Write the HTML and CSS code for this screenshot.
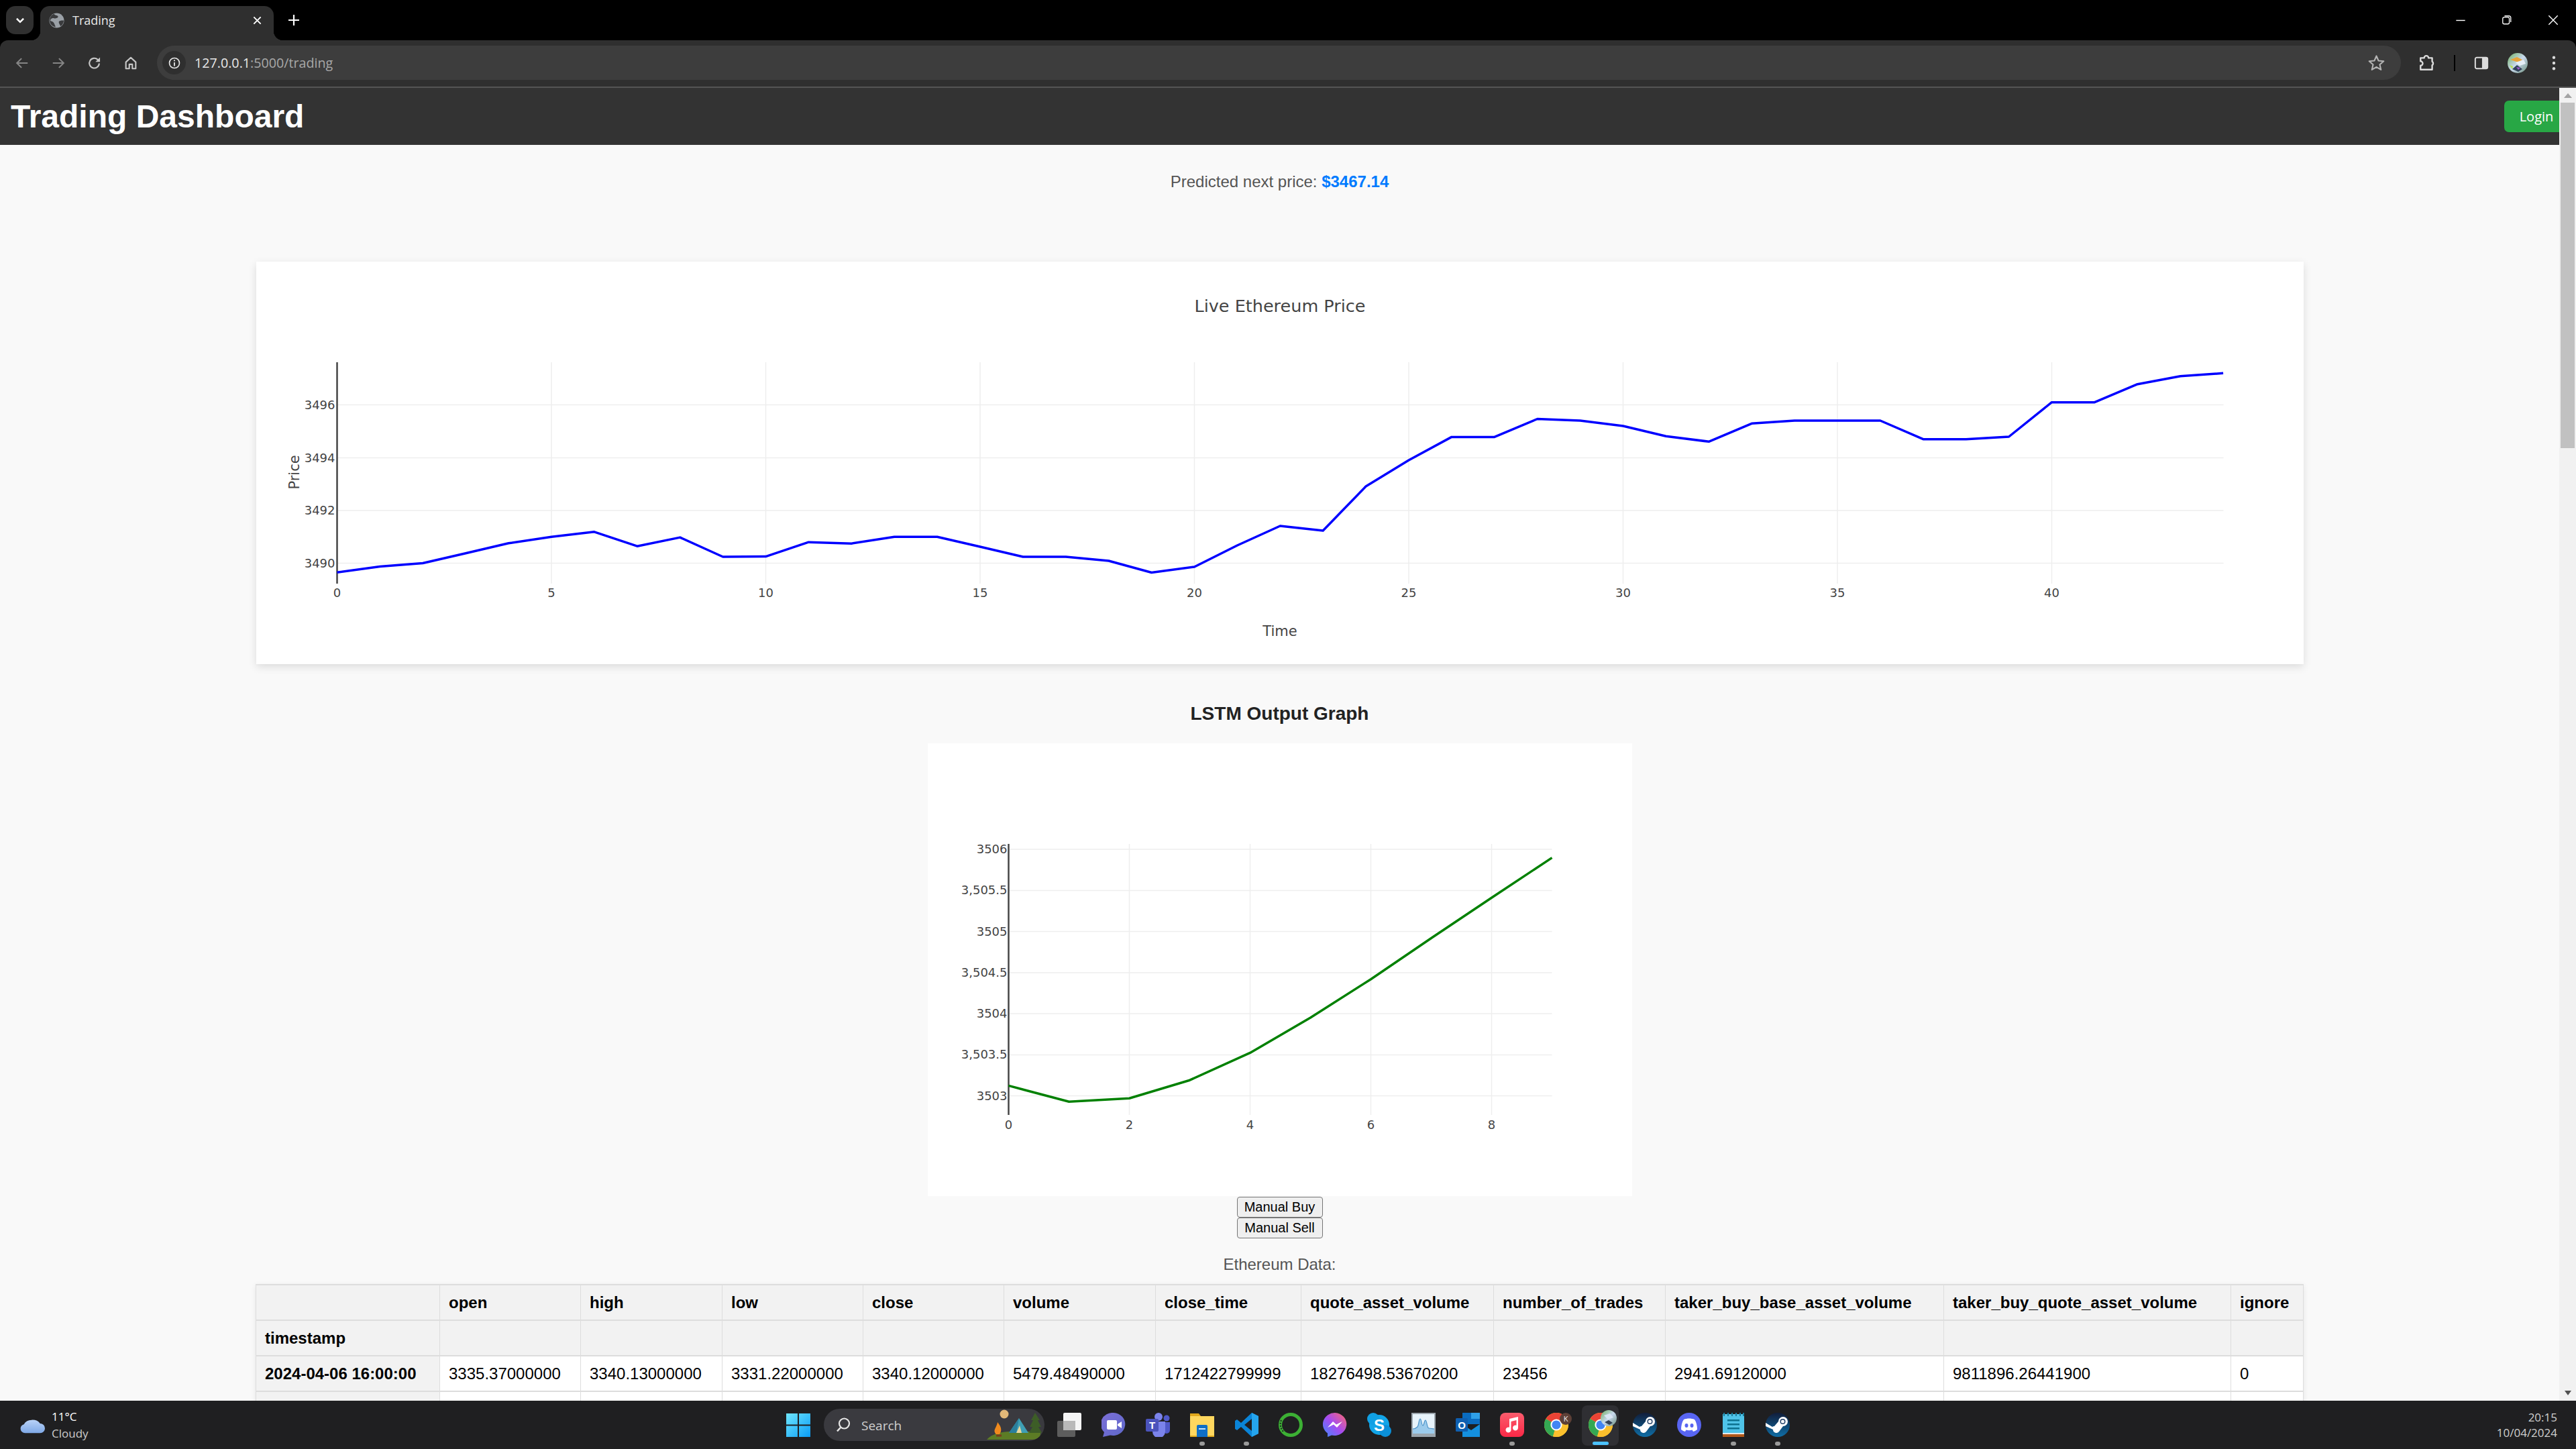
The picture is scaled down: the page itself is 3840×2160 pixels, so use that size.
FILE: index.html
```html
<!DOCTYPE html>
<html lang="en">
<head>
<meta charset="utf-8">
<title>Trading</title>
<link rel="stylesheet" href="styles.css">
</head>
<body>
<svg class="defs" width="0" height="0" aria-hidden="true">
  <defs>
    <symbol id="chrome" viewBox="0 0 36 36">
      <circle cx="18" cy="18" r="18" fill="#fbc02d"/>
      <path d="M18 18 2.4 9A18 18 0 0 1 33.6 9Z" fill="#ea4335"/>
      <path d="M18 18 2.4 9A18 18 0 0 0 13 35.3Z" fill="#34a853"/>
      <path d="M18 18 33.6 9A18 18 0 0 1 13 35.3Z" fill="#fbc02d"/>
      <circle cx="18" cy="18" r="8.6" fill="#fff"/>
      <circle cx="18" cy="18" r="6.6" fill="#4285f4"/>
    </symbol>
    <symbol id="steam" viewBox="0 0 36 36">
      <defs><linearGradient id="steamg" x1="0" y1="0" x2="0" y2="1"><stop offset="0" stop-color="#111d3a"/><stop offset="1" stop-color="#0f6ea6"/></linearGradient></defs>
      <circle cx="18" cy="18" r="18" fill="url(#steamg)"/>
      <path d="M0 20 11 25a5 5 0 0 0 9 3l6-8a7 7 0 1 0-7-7l-6 7a5 5 0 0 0-3 1L0 15Z" fill="#fff"/>
      <circle cx="25.500" cy="13" r="4" fill="#1a3a63"/>
      <circle cx="25.500" cy="13" r="2.600" fill="#fff"/>
    </symbol>
  </defs>
</svg>

<div class="tabstrip">
  <div class="tab-search">
    <svg class="ico16" viewBox="0 0 16 16"><path d="M3.500 6 8 10.500 12.500 6" fill="none" stroke="#fff" stroke-width="2.200"/></svg>
  </div>
  <div class="tab">
    <svg class="favicon" viewBox="0 0 24 24"><circle cx="12" cy="12" r="11.500" fill="#9aa0a6"/><path d="M8 1.500c1 3 5 2 6 4s-3 4-6 3-6 1-6 4c2 1 5 1 6 4s2 3 2 6A11 11 0 0 1 1 12 11 11 0 0 1 8 1.500ZM16 13c2-1 5-1 7-1a11 11 0 0 1-5 9c-1-3-4-6-2-8Z" fill="#3a3b3d"/></svg>
    <span class="tab-title">Trading</span>
    <svg class="tab-close" viewBox="0 0 16 16"><path d="M2.500 2.500l11 11M13.500 2.500l-11 11" stroke="#fff" stroke-width="2"/></svg>
  </div>
  <svg class="tab-new" viewBox="0 0 20 20"><path d="M10 2v16M2 10h16" stroke="#fff" stroke-width="2.200"/></svg>
  <div class="window-controls">
    <span class="winbtn"><svg viewBox="0 0 18 18"><path d="M1.500 9.500h15" stroke="#fff" stroke-width="1.600"/></svg></span>
    <span class="winbtn"><svg viewBox="0 0 18 18"><rect x="2" y="4" width="11" height="11.500" rx="2.500" fill="none" stroke="#fff" stroke-width="1.500"/><path d="M5 2h7.500A3 3 0 0 1 15.500 5v7.500" fill="none" stroke="#fff" stroke-width="1.500"/></svg></span>
    <span class="winbtn"><svg viewBox="0 0 18 18"><path d="M1.500 1.500l15 15M16.500 1.500l-15 15" stroke="#fff" stroke-width="1.600"/></svg></span>
  </div>
</div>

<div class="toolbar">
  <span class="tool"><svg class="ico" viewBox="0 0 24 24"><path d="M21 12H4M11 4.500 3.500 12l7.500 7.500" fill="none" stroke="#858585" stroke-width="2.300"/></svg></span>
  <span class="tool"><svg class="ico" viewBox="0 0 24 24"><path d="M3 12h17M13 4.500l7.500 7.500-7.500 7.500" fill="none" stroke="#858585" stroke-width="2.300"/></svg></span>
  <span class="tool"><svg class="ico" viewBox="0 0 24 24"><path d="M19.500 12.500A8 8 0 1 1 17 6.300L20 9" fill="none" stroke="#c7c7c7" stroke-width="2.300"/><path d="M20.800 2.800v7.400h-7.400" fill="#c7c7c7"/></svg></span>
  <span class="tool"><svg class="ico" viewBox="0 0 24 24"><path d="M4 21V10.500L12 3l8 7.500V21h-5.500v-7h-5v7Z" fill="none" stroke="#c7c7c7" stroke-width="2.300" stroke-linejoin="round"/></svg></span>
  <div class="omnibox">
    <span class="site-info"><svg class="ico-info" viewBox="0 0 24 24"><circle cx="12" cy="12" r="10" fill="none" stroke="#e8e8e8" stroke-width="2.200"/><path d="M12 10.500V18" stroke="#e8e8e8" stroke-width="2.400"/><circle cx="12" cy="7" r="1.500" fill="#e8e8e8"/></svg></span>
    <span class="url"><span class="url-host">127.0.0.1</span>:5000/trading</span>
    <svg class="star" viewBox="0 0 26 26"><path d="M13 2.500l3.200 7.400 8 .7-6 5.300 1.800 7.900L13 19.600l-7 4.200 1.800-7.900-6-5.300 8-.7Z" fill="none" stroke="#b5b5b5" stroke-width="2.200" stroke-linejoin="round"/></svg>
  </div>
  <span class="tool tool-ext"><svg class="ico-ext" viewBox="0 0 24 24"><path d="M3 5h5a3 3 0 0 1 6 0h5v5a3 3 0 0 1 0 5v6H3v-5.500a3 3 0 0 0 0-6Z" fill="none" stroke="#dcdcdc" stroke-width="2.200" stroke-linejoin="round"/></svg></span>
  <span class="tool-sep"></span>
  <span class="tool"><svg class="ico" viewBox="0 0 24 24"><rect x="2" y="3" width="20" height="18" rx="2.500" fill="none" stroke="#dcdcdc" stroke-width="2.200"/><path d="M13 3h7a2 2 0 0 1 2 2v14a2 2 0 0 1-2 2h-7Z" fill="#dcdcdc"/></svg></span>
  <span class="tool"><svg class="avatar" viewBox="0 0 30 30"><defs><linearGradient id="av" x1="0" y1="0" x2="1" y2="1"><stop offset="0" stop-color="#6fae5e"/><stop offset=".5" stop-color="#c9d9ee"/><stop offset="1" stop-color="#6b8f7a"/></linearGradient></defs><circle cx="15" cy="15" r="15" fill="url(#av)"/><path d="M4 10 14 6l8 4-6 4Z" fill="#e8a33a"/><path d="M12 14 24 10l3 6-9 3Z" fill="#e6eef7"/><path d="M7 24 14 18l8 6-6 4Z" fill="#31435a"/><path d="M3 18l5 2-1 4Z" fill="#b8e04a"/><path d="M13 21l6 1-3 3Z" fill="#a35bd0"/></svg></span>
  <span class="tool"><svg class="ico" viewBox="0 0 24 24"><circle cx="12" cy="3" r="2.400" fill="#dcdcdc"/><circle cx="12" cy="12" r="2.400" fill="#dcdcdc"/><circle cx="12" cy="21" r="2.400" fill="#dcdcdc"/></svg></span>
</div>

<div class="viewport">
  <main class="page">
    <header class="app-header">
      <h1 class="app-title">Trading Dashboard</h1>
      <button class="login" type="button">Login</button>
    </header>

    <p class="prediction">Predicted next price: <strong class="prediction-value">$3467.14</strong></p>

    <section class="card">
      <svg class="chart" viewBox="381.500 390 3052 600">
        <g class="grid">
          <path d="M821.500 540V870M1141 540V870M1460.500 540V870M1780 540V870M2099.500 540V870M2419 540V870M2738.500 540V870M3058 540V870"/>
          <path d="M503 603.500H3314M503 682.500H3314M503 761H3314M503 839.500H3314"/>
        </g>
        <path class="axis" d="M502 540V870"/>
        <polyline class="line-blue" points="502,853.300 565.900,844.600 629.800,839.500 693.700,824.800 757.600,809.800 821.500,800.300 885.400,792.800 949.300,814.200 1013.200,801.100 1077.100,830 1141,829.600 1204.900,808.200 1268.800,810.200 1332.700,800.300 1396.600,800.300 1460.500,815 1524.400,830 1588.300,830 1652.200,836 1716.100,853.500 1780,845 1843.900,813 1907.800,784 1971.700,791 2035.600,725 2099.500,686 2163.400,651.400 2227.300,651.400 2291.200,624.500 2355.100,627 2419,635 2482.900,650.300 2546.800,658.300 2610.700,631.300 2674.600,627 2738.500,627 2802.400,627 2866.300,654.700 2930.200,654.700 2994.100,651 3058,599.700 3121.900,599.700 3185.800,572.700 3249.700,560.700 3313.600,556.300"/>
        <text class="chart-title" x="1907.500" y="465">Live Ethereum Price</text>
        <g class="ytick">
          <text x="499" y="610">3496</text>
          <text x="499" y="689">3494</text>
          <text x="499" y="767">3492</text>
          <text x="499" y="846">3490</text>
        </g>
        <g class="xtick">
          <text x="502" y="890">0</text>
          <text x="821.500" y="890">5</text>
          <text x="1141" y="890">10</text>
          <text x="1460.500" y="890">15</text>
          <text x="1780" y="890">20</text>
          <text x="2099.500" y="890">25</text>
          <text x="2419" y="890">30</text>
          <text x="2738.500" y="890">35</text>
          <text x="3058" y="890">40</text>
        </g>
        <text class="axis-title" x="1907.500" y="948">Time</text>
        <text class="axis-title" transform="translate(445 704) rotate(-90)">Price</text>
      </svg>
    </section>

    <h3 class="lstm-title">LSTM Output Graph</h3>
    <div class="plot-box">
      <svg class="chart" viewBox="1382.500 1108 1050 675">
        <g class="grid">
          <path d="M1683 1258V1662M1863 1258V1662M2043 1258V1662M2223 1258V1662"/>
          <path d="M1504 1266H2313M1504 1327.500H2313M1504 1388.500H2313M1504 1450H2313M1504 1511H2313M1504 1572.500H2313M1504 1633.500H2313"/>
        </g>
        <path class="axis" d="M1503 1258V1662"/>
        <polyline class="line-green" points="1503,1618.400 1593,1642.300 1683,1637.200 1773,1610.200 1863,1569.400 1953,1517 2043,1459.700 2133,1398.500 2223,1338.300 2313,1278.600"/>
        <g class="ytick">
          <text x="1501" y="1272">3506</text>
          <text x="1501" y="1333">3,505.5</text>
          <text x="1501" y="1395">3505</text>
          <text x="1501" y="1456">3,504.5</text>
          <text x="1501" y="1517">3504</text>
          <text x="1501" y="1578">3,503.5</text>
          <text x="1501" y="1640">3503</text>
        </g>
        <g class="xtick">
          <text x="1503" y="1683">0</text>
          <text x="1683" y="1683">2</text>
          <text x="1863" y="1683">4</text>
          <text x="2043" y="1683">6</text>
          <text x="2223" y="1683">8</text>
        </g>
      </svg>
    </div>

    <button class="manual" type="button">Manual Buy</button>
    <button class="manual" type="button">Manual Sell</button>

    <p class="data-label">Ethereum Data:</p>

    <table class="data-table">
      <colgroup>
        <col class="c-ts"><col class="c-a"><col class="c-b"><col class="c-a"><col class="c-a"><col class="c-vol">
        <col class="c-ct"><col class="c-qav"><col class="c-nt"><col class="c-tb"><col class="c-tq"><col class="c-ig">
      </colgroup>
      <thead>
        <tr><th></th><th>open</th><th>high</th><th>low</th><th>close</th><th>volume</th><th>close_time</th><th>quote_asset_volume</th><th>number_of_trades</th><th>taker_buy_base_asset_volume</th><th>taker_buy_quote_asset_volume</th><th>ignore</th></tr>
        <tr><th>timestamp</th><th></th><th></th><th></th><th></th><th></th><th></th><th></th><th></th><th></th><th></th><th></th></tr>
      </thead>
      <tbody>
        <tr><th>2024-04-06 16:00:00</th><td>3335.37000000</td><td>3340.13000000</td><td>3331.22000000</td><td>3340.12000000</td><td>5479.48490000</td><td>1712422799999</td><td>18276498.53670200</td><td>23456</td><td>2941.69120000</td><td>9811896.26441900</td><td>0</td></tr>
        <tr><th>&nbsp;</th><td></td><td></td><td></td><td></td><td></td><td></td><td></td><td></td><td></td><td></td><td></td></tr>
      </tbody>
    </table>
  </main>
  <div class="scrollbar">
    <span class="scroll-up"></span>
    <span class="scroll-thumb"></span>
    <span class="scroll-fill"></span>
    <span class="scroll-down"></span>
  </div>
</div>

<footer class="taskbar">
  <div class="weather">
    <svg class="cloud" viewBox="0 0 36 24"><defs><linearGradient id="cl" x1="0" y1="0" x2="0" y2="1"><stop offset="0" stop-color="#b9d2f7"/><stop offset="1" stop-color="#7ea8e6"/></linearGradient></defs><path d="M7 23.500A6.500 6.500 0 0 1 5.500 10.700 13 10 0 0 1 29 9.500 7 7 0 0 1 29 23.500Z" fill="url(#cl)"/></svg>
    <div class="weather-text"><span class="temp">11°C</span><span class="cond">Cloudy</span></div>
  </div>

  <div class="task-center">
    <span class="task-item"><svg class="task-ico" viewBox="0 0 36 36"><defs><linearGradient id="wn" x1="0" y1="0" x2="1" y2="1"><stop offset="0" stop-color="#6fe6ff"/><stop offset="1" stop-color="#0a9cf5"/></linearGradient></defs><path d="M0 1h17v16.500H0ZM19 1h17v16.500H19ZM0 19.500h17V36H0ZM19 19.500h17V36H19Z" fill="url(#wn)"/></svg></span>
    <div class="search">
      <svg class="search-ico" viewBox="0 0 24 24"><circle cx="13.500" cy="10" r="7.500" fill="none" stroke="#e6e6e6" stroke-width="2.200"/><path d="M8 16 3 21.500" stroke="#e6e6e6" stroke-width="2.600"/></svg>
      <span class="search-text">Search</span>
      <svg class="scene" viewBox="0 0 84 48">
        <circle cx="26" cy="8" r="6.500" fill="#e2b878"/>
        <path d="M0 46C8 36 30 33 42 34c14 0 30 0 38 0 1 7-3 12-12 12Z" fill="#5c7c25"/>
        <path d="M33 36 48 14l14 22Z" fill="#3f9fb5"/>
        <path d="M33 36 48 14l-4 22Z" fill="#2a7f9c"/>
        <path d="M44 36l5-11 3 11Z" fill="#e9d79c"/>
        <path d="M14 38c-6-6 1-10 2-18 4 5 8 11 3 18Z" fill="#f08a1d"/>
        <path d="M14 40h8" stroke="#7a3d1a" stroke-width="3"/>
        <path d="M72 6 66 17h3l-5 10h4l-5 9h19l-5-9h4l-5-10h3Z" fill="#3d5d27"/>
      </svg>
    </div>
    <span class="task-item"><svg class="task-ico" viewBox="0 0 36 36"><rect x="0" y="12" width="27" height="24" rx="2" fill="#5d5d5d"/><rect x="9" y="0" width="27" height="26" rx="2" fill="#f5f5f5"/><rect x="9" y="12" width="18" height="14" fill="#b9b9b9"/></svg></span>
    <span class="task-item"><svg class="task-ico" viewBox="0 0 36 36"><defs><linearGradient id="mt" x1="0" y1="0" x2="1" y2="1"><stop offset="0" stop-color="#7d6fd8"/><stop offset="1" stop-color="#5d68c9"/></linearGradient></defs><path d="M18 0A18 17 0 1 1 13 33.500L2 36l2-7A18 17 0 0 1 18 0Z" fill="url(#mt)"/><rect x="8" y="11" width="15" height="14" rx="2" fill="#fff"/><path d="M24 17l6-4v10l-6-4Z" fill="#fff"/></svg></span>
    <span class="task-item"><svg class="task-ico" viewBox="0 0 36 36"><circle cx="19" cy="6" r="6" fill="#7b83eb"/><circle cx="31" cy="8" r="4.500" fill="#5059c9"/><path d="M26 14h10v12a5 5 0 0 1-10 0Z" fill="#5059c9"/><path d="M10 13h19v15a9 9 0 0 1-19 0Z" fill="#7b83eb"/><rect x="0" y="9" width="19" height="19" rx="2" fill="#4b53bc"/><text class="teams-t" x="9.500" y="24">T</text></svg></span>
    <span class="task-item has-dot"><svg class="task-ico" viewBox="0 0 36 36"><path d="M0 1h13l3 4h20v31H0Z" fill="#e2a81c"/><rect x="0" y="5" width="36" height="31" fill="#ffd75e"/><path d="M0 34h36v2H0Z" fill="#e0a91f"/><path d="M10 20a2 2 0 0 1 2-2h12a2 2 0 0 1 2 2v16H10Z" fill="#0f6fc6"/><path d="M13 23h10v2H13Z" fill="#c9e4fb"/></svg></span>
    <span class="task-item has-dot"><svg class="task-ico" viewBox="0 0 36 36"><path d="M26 0 36 5v26l-10 5L10 21l-6 5-3-2V12l3-2 6 5Z" fill="#0a84d8"/><path d="M26 9 15 18l11 9Z" fill="#1f1f23"/><path d="M26 0 36 5v26l-10 5Z" fill="#25a5ee"/></svg></span>
    <span class="task-item"><svg class="task-ico" viewBox="0 0 36 36"><circle cx="18" cy="18" r="15.500" fill="none" stroke="#3cb034" stroke-width="5"/><path d="M4 11A15.500 15.500 0 0 0 7 28" fill="none" stroke="#1f1f23" stroke-width="2" stroke-dasharray="2 2"/></svg></span>
    <span class="task-item"><svg class="task-ico" viewBox="0 0 36 36"><defs><linearGradient id="ms" x1="0" y1="1" x2="1" y2="0"><stop offset="0" stop-color="#3d8bff"/><stop offset=".5" stop-color="#a64bf0"/><stop offset="1" stop-color="#ff6a6a"/></linearGradient></defs><path d="M18 0A18 17 0 1 1 13 33.500L7 36v-5.500A18 17 0 0 1 18 0Z" fill="url(#ms)"/><path d="M7 22l8-9 5 4.500L29 13l-8 9-5-4.500Z" fill="#fff"/></svg></span>
    <span class="task-item"><svg class="task-ico" viewBox="0 0 36 36"><circle cx="18" cy="18" r="15" fill="#12a5e8"/><circle cx="9" cy="9" r="9" fill="#10a0e4"/><circle cx="27" cy="27" r="9" fill="#0b8fd8"/><text class="skype-s" x="18" y="27">S</text></svg></span>
    <span class="task-item"><svg class="task-ico" viewBox="0 0 36 36"><rect width="36" height="36" fill="#9ba5ad"/><rect x="2" y="2" width="32" height="29" fill="#e7f3fb"/><path d="M2 24c4 0 5-1 7-3s2-12 4-12 2 10 4 10 2-8 4-8 2 12 5 12 5 1 8 1v7H2Z" fill="#9ccbec"/><path d="M2 24c4 0 5-1 7-3s2-12 4-12 2 10 4 10 2-8 4-8 2 12 5 12 5 1 8 1" fill="none" stroke="#4b93c9" stroke-width="1.200"/></svg></span>
    <span class="task-item"><svg class="task-ico" viewBox="0 0 36 36"><path d="M10 0h26v17H10Z" fill="#0a6cc0"/><path d="M23 0h13v9H23Z" fill="#2fa0e8"/><path d="M10 17 23 26l13-9v19H10Z" fill="#1490df"/><rect x="0" y="8" width="18" height="20" rx="1.500" fill="#0f5fb0"/><text class="outlook-o" x="9" y="24">O</text></svg></span>
    <span class="task-item has-dot"><svg class="task-ico" viewBox="0 0 36 36"><defs><linearGradient id="am" x1="0" y1="0" x2="0" y2="1"><stop offset="0" stop-color="#fa5c6d"/><stop offset="1" stop-color="#fb2846"/></linearGradient></defs><rect width="36" height="36" rx="8" fill="url(#am)"/><path d="M14 9 27 6v16.500a4 4 0 1 1-2.500-3.700V11l-8 2v12.500a4 4 0 1 1-2.500-3.700Z" fill="#fff"/></svg></span>
    <span class="task-item"><svg class="task-ico task-round" viewBox="0 0 36 36"><use href="#chrome"/></svg><span class="profile-k">K</span></span>
    <span class="task-item task-active"><svg class="task-ico" viewBox="0 0 36 36"><use href="#chrome"/></svg><svg class="profile-pic" viewBox="0 0 24 24"><circle cx="12" cy="12" r="12" fill="url(#av)"/><path d="M5 8l9-3 5 6-8 3Z" fill="#dbe6f4"/><path d="M6 18l6-3 6 4-5 3Z" fill="#33445a"/></svg><span class="active-bar"></span></span>
    <span class="task-item"><svg class="task-ico" viewBox="0 0 36 36"><use href="#steam"/></svg></span>
    <span class="task-item"><svg class="task-ico" viewBox="0 0 36 36"><circle cx="18" cy="18" r="18" fill="#5865f2"/><path d="M10 10c5-2 11-2 16 0 3 4 4 10 4 15-2 1.500-4 2.500-6 3l-1.500-2.500c-3 1-6 1-9 0L12 28c-2-.5-4-1.500-6-3 0-5 1-11 4-15Z" fill="#fff"/><ellipse cx="14" cy="19" rx="2.500" ry="3" fill="#5865f2"/><ellipse cx="22" cy="19" rx="2.500" ry="3" fill="#5865f2"/></svg></span>
    <span class="task-item has-dot"><svg class="task-ico" viewBox="0 0 36 36"><rect x="2" y="2" width="32" height="28" fill="#4fc3e8"/><path d="M4 0v5M10 0v5M16 0v5M22 0v5M28 0v5M33 0v5" stroke="#1a7f9f" stroke-width="2"/><path d="M9 10h18v2.500H9ZM9 16h18v2.500H9ZM9 22h18v2.500H9Z" fill="#0d7290"/><rect x="2" y="30" width="32" height="2" fill="#e8e8e8"/><rect x="2" y="32" width="32" height="4" fill="#b2591a"/></svg></span>
    <span class="task-item has-dot"><svg class="task-ico" viewBox="0 0 36 36"><use href="#steam"/></svg></span>
  </div>

  <div class="clock"><span>20:15</span><span>10/04/2024</span></div>
</footer>
</body>
</html>
```

FILE: styles.css
```css
* { box-sizing: border-box; }
html, body { margin: 0; padding: 0; }
body {
  width: 3840px;
  height: 2160px;
  overflow: hidden;
  display: flex;
  flex-direction: column;
  background: #000;
  font-family: "Liberation Sans", Arial, sans-serif;
}
.defs { position: absolute; }

/* browser chrome */
.tabstrip {
  height: 60px;
  flex: none;
  display: flex;
  align-items: flex-start;
  padding: 9px 0 0 9px;
  background: #000;
}
.tab-search {
  width: 41px;
  height: 42px;
  border-radius: 14px;
  background: #303030;
  display: flex;
  align-items: center;
  justify-content: center;
}
.ico16 { width: 18px; height: 18px; }
.tab {
  position: relative;
  width: 348px;
  height: 51px;
  margin-left: 10px;
  display: flex;
  align-items: center;
  padding: 0 15px 9px 13px;
  background: #2f2f2f;
  border-radius: 14px 14px 0 0;
}
.tab::before, .tab::after {
  content: "";
  position: absolute;
  bottom: 0;
  width: 14px;
  height: 14px;
}
.tab::before { left: -14px; background: radial-gradient(circle at 0 0, transparent 14px, #2f2f2f 14.500px); }
.tab::after { right: -14px; background: radial-gradient(circle at 100% 0, transparent 14px, #2f2f2f 14.500px); }
.favicon { width: 23px; height: 23px; flex: none; }
.tab-title {
  margin-left: 12px;
  flex: 1;
  color: #e8e8e8;
  font: 18px "Open Sans", sans-serif;
}
.tab-close { width: 15px; height: 15px; flex: none; margin-right: 2px; }
.tab-new { width: 20px; height: 20px; margin: 11px 0 0 20px; flex: none; }
.window-controls { margin-left: auto; display: flex; margin-top: -9px; }
.winbtn {
  width: 69px;
  height: 60px;
  display: flex;
  align-items: center;
  justify-content: center;
}
.winbtn svg { width: 16px; height: 16px; }

.toolbar {
  height: 71px;
  flex: none;
  display: flex;
  align-items: center;
  padding: 9px 6px 11px;
  background: #2f2f2f;
  border-bottom: 2px solid #555;
  border-radius: 12px 12px 0 0;
}
.tool {
  width: 54px;
  height: 51px;
  flex: none;
  display: flex;
  align-items: center;
  justify-content: center;
}
.ico { width: 22px; height: 22px; }
.ico-ext { width: 26px; height: 26px; }
.omnibox {
  flex: 1;
  height: 51px;
  margin: 0 12px;
  padding: 0 24px 0 8px;
  display: flex;
  align-items: center;
  background: #3d3d3d;
  border-radius: 26px;
}
.site-info {
  width: 35px;
  height: 35px;
  border-radius: 50%;
  background: #2f2f2f;
  display: flex;
  align-items: center;
  justify-content: center;
  flex: none;
}
.ico-info { width: 18px; height: 18px; }
.url {
  margin-left: 13px;
  flex: 1;
  color: #a8a8a8;
  font: 19.700px "Open Sans", sans-serif;
}
.url-host { color: #e8e8e8; }
.star { width: 25px; height: 25px; flex: none; }
.tool-sep {
  width: 27px;
  flex: none;
  height: 24px;
  display: flex;
  justify-content: center;
}
.tool-sep::before { content: ""; width: 2px; background: #000; }
.avatar { width: 30px; height: 30px; }

/* viewport */
.viewport {
  flex: 1;
  min-height: 0;
  display: flex;
  background: #f9f9f9;
}
.page {
  flex: 1;
  min-width: 0;
  overflow: hidden;
  color: #555;
  font-size: 24px;
}
.app-header {
  height: 85px;
  display: flex;
  align-items: center;
  justify-content: space-between;
  padding-left: 16px;
  background: #333;
}
.app-title {
  margin: 0;
  color: #fff;
  font-size: 48px;
  font-weight: 700;
  line-height: 56px;
}
.login {
  flex: none;
  width: 96px;
  height: 47px;
  margin-right: -14px;
  padding: 0;
  border: 0;
  border-radius: 7px;
  background: #28a745;
  color: #fff;
  font: 20px "Open Sans", sans-serif;
}
.prediction {
  margin: 41px 0 0;
  text-align: center;
  line-height: 28px;
}
.prediction-value { color: #007bff; }
.card {
  width: 80%;
  height: 600px;
  margin: 105px auto 0;
  background: #fff;
  box-shadow: 0 4px 12px rgba(0, 0, 0, 0.12);
}
.chart { display: block; width: 100%; height: 100%; }
.grid path { fill: none; stroke: #eee; stroke-width: 1.5; }
.axis { fill: none; stroke: #444; stroke-width: 2.5; }
.line-blue { fill: none; stroke: #00f; stroke-width: 3.5; stroke-linejoin: round; }
.line-green { fill: none; stroke: #008000; stroke-width: 3.5; stroke-linejoin: round; }
.chart text { font-family: "DejaVu Sans", Verdana, sans-serif; fill: #444; }
.chart-title { font-size: 25.500px; text-anchor: middle; }
.axis-title { font-size: 21px; text-anchor: middle; }
.ytick text { font-size: 18px; text-anchor: end; }
.xtick text { font-size: 18px; text-anchor: middle; }
.lstm-title {
  margin: 58px 0 0;
  color: #222;
  text-align: center;
  font-size: 28px;
  line-height: 32px;
}
.plot-box {
  width: 1050px;
  height: 675px;
  margin: 28px auto 1px;
  background: #fff;
}
.manual {
  display: block;
  width: 128px;
  height: 31px;
  margin: 0 auto;
  padding: 0;
  border: 1.500px solid #767676;
  border-radius: 4px;
  background: #efefef;
  color: #000;
  font: 20px "Liberation Sans", Arial, sans-serif;
}
.data-label {
  margin: 25px 0 15px;
  text-align: center;
  line-height: 28px;
}
.data-table {
  width: 80%;
  margin: 0 auto;
  table-layout: fixed;
  border-collapse: collapse;
  background: #fff;
  color: #000;
  font-size: 24px;
  box-shadow: 0 2px 8px rgba(0, 0, 0, 0.08);
}
.data-table th, .data-table td {
  height: 53px;
  padding: 0 13px;
  text-align: left;
  white-space: nowrap;
  border-left: 1px solid #ddd;
  border-right: 1px solid #ddd;
  border-top: 2px solid #ddd;
  border-bottom: 2px solid #ddd;
}
.data-table th { background: #f2f2f2; }
.c-ts { width: 274px; }
.c-a { width: 210px; }
.c-b { width: 211px; }
.c-vol { width: 226px; }
.c-ct { width: 217px; }
.c-qav { width: 287px; }
.c-nt { width: 256px; }
.c-tb { width: 415px; }
.c-tq { width: 428px; }
.c-ig { width: 108px; }

/* scrollbar */
.scrollbar {
  width: 25px;
  flex: none;
  display: flex;
  flex-direction: column;
  align-items: center;
  background: #f1f1f1;
}
.scroll-up {
  width: 0;
  height: 0;
  margin: 8px 0 7px;
  border-left: 6px solid transparent;
  border-right: 6px solid transparent;
  border-bottom: 7px solid #a3a3a3;
  flex: none;
}
.scroll-thumb { width: 21px; height: 515px; background: #c1c1c1; flex: none; }
.scroll-fill { flex: 1; }
.scroll-down {
  width: 0;
  height: 0;
  margin-bottom: 8px;
  border-left: 5px solid transparent;
  border-right: 5px solid transparent;
  border-top: 7px solid #505050;
  flex: none;
}

/* taskbar */
.taskbar {
  height: 72px;
  flex: none;
  display: grid;
  grid-template-columns: 1fr auto 1fr;
  align-items: center;
  background: #1f1f21;
  color: #fff;
  font-family: "Open Sans", sans-serif;
}
.weather { display: flex; align-items: center; padding-left: 30px; }
.cloud { width: 37px; height: 25px; flex: none; }
.weather-text { display: flex; flex-direction: column; margin-left: 10px; }
.temp { font-size: 17px; line-height: 25px; }
.cond { font-size: 17px; line-height: 25px; color: #ccc; }
.task-center { display: flex; align-items: center; }
.task-item {
  position: relative;
  width: 66px;
  height: 72px;
  display: flex;
  align-items: center;
  justify-content: center;
  flex: none;
}
.task-ico { width: 36px; height: 36px; }
.has-dot::after {
  content: "";
  position: absolute;
  left: 29px;
  bottom: 5px;
  width: 8px;
  height: 6px;
  border-radius: 3px;
  background: #9a9a9a;
}
.task-active::before {
  content: "";
  position: absolute;
  left: 5px;
  top: 7px;
  width: 55px;
  height: 60px;
  border-radius: 8px;
  background: #2f2f33;
}
.task-active .task-ico { position: relative; }
.active-bar {
  position: absolute;
  left: 21px;
  bottom: 6px;
  width: 24px;
  height: 5px;
  border-radius: 3px;
  background: #4cc2ff;
}
.profile-pic {
  position: absolute;
  left: 33px;
  top: 12px;
  width: 24px;
  height: 28px;
}
.profile-k {
  position: absolute;
  left: 38px;
  top: 18px;
  width: 18px;
  height: 18px;
  border-radius: 50%;
  background: #5d4037;
  color: #eee;
  font-size: 11px;
  line-height: 18px;
  text-align: center;
}
.search {
  width: 329px;
  height: 48px;
  margin: 0 4px 0 5px;
  padding: 0 2px 0 17px;
  display: flex;
  align-items: center;
  border-radius: 24px;
  background: #3a3a3f;
  overflow: hidden;
}
.search-ico { width: 24px; height: 24px; flex: none; }
.search-text { margin-left: 15px; padding-top: 2px; flex: 1; color: #d0d0d0; font-size: 19px; }
.scene { width: 84px; height: 48px; flex: none; }
.clock {
  justify-self: end;
  padding-right: 28px;
  display: flex;
  flex-direction: column;
  align-items: flex-end;
  color: #cfcfcf;
  font-size: 17px;
  line-height: 23px;
}
.teams-t { fill: #fff; font: bold 15px "Liberation Sans", sans-serif; text-anchor: middle; }
.skype-s { fill: #fff; font: bold 24px "Liberation Sans", sans-serif; text-anchor: middle; }
.outlook-o { fill: #fff; font: bold 15px "Liberation Sans", sans-serif; text-anchor: middle; }
```
